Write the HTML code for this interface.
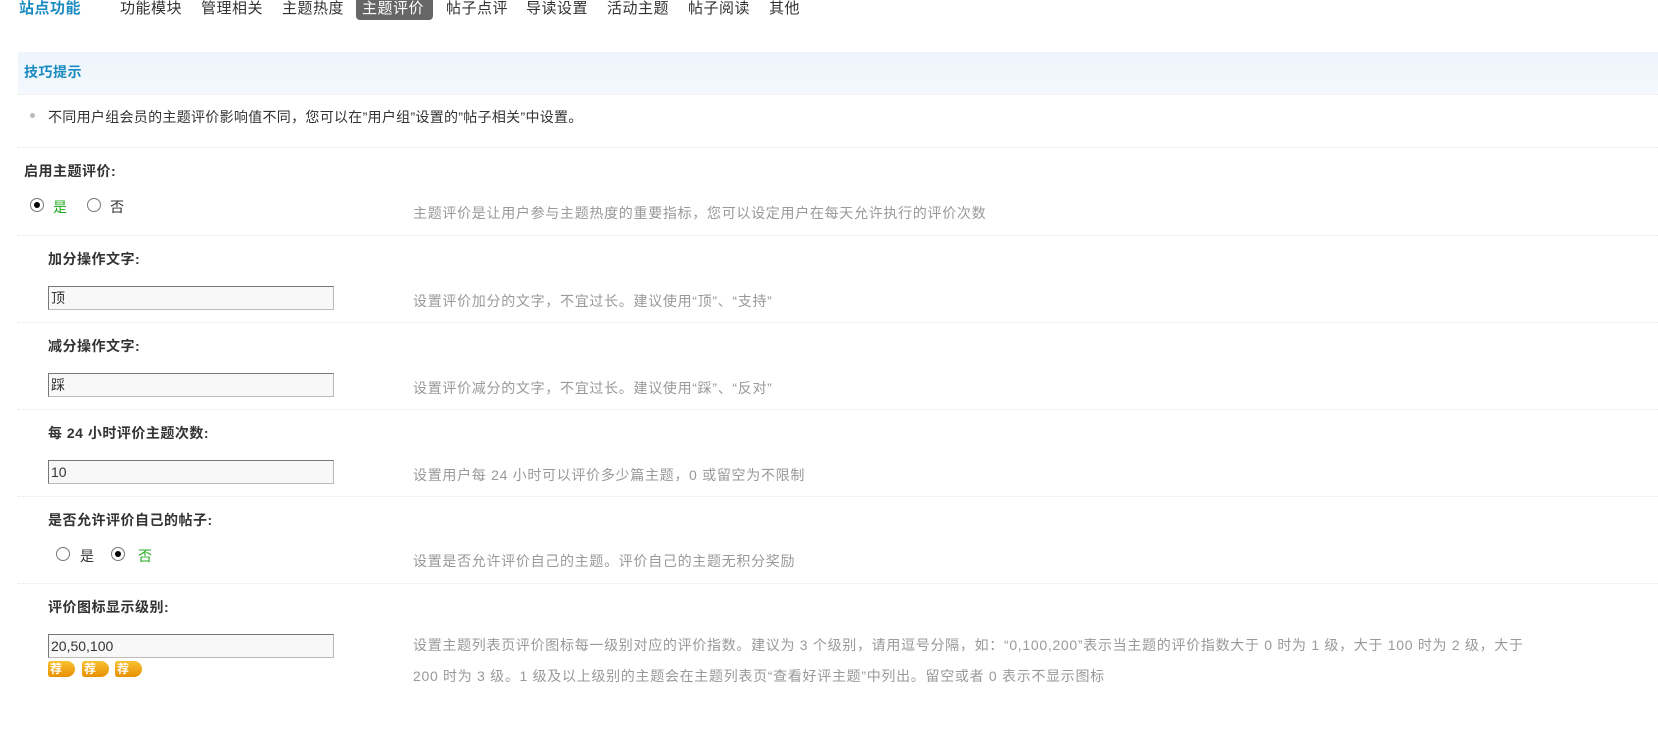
<!DOCTYPE html>
<html><head><meta charset="utf-8"><style>
body{margin:0;width:1658px;height:740px;overflow:hidden;background:#fff;font-family:"Liberation Sans","Noto Sans CJK SC",sans-serif;font-size:14px;color:#333}
.a{position:absolute;white-space:nowrap}
.nav span{position:absolute;top:0;font-size:15px;color:#333;line-height:18px;letter-spacing:.5px}
.sep{position:absolute;left:18px;right:0;height:0;border-top:1px dotted #e6e6e6}
.lbl{font-weight:bold;font-size:14px;color:#333;letter-spacing:.5px}
.hint{color:#999;font-size:14px;letter-spacing:.7px}
.inp{position:absolute;left:48px;width:282px;height:22px;border:1px solid #bbb;border-top-color:#777;border-left-color:#777;background:#f8f8f8;font-size:14px;line-height:22px;padding-left:2px;box-sizing:content-box;color:#333}
.r{position:absolute;width:12px;height:12px;border:1px solid #777;border-radius:50%;background:#fff}
.r.on::after{content:"";position:absolute;left:3px;top:3px;width:6px;height:6px;border-radius:50%;background:#000}
.icon{position:absolute;top:661px;width:27px;height:16px;background:linear-gradient(#f8c030,#e89000);border-radius:3px 9px 9px 3px;color:#fff;font-size:12px;font-weight:bold;line-height:16px;padding-left:2px;box-sizing:border-box}
</style></head><body>
<div class="nav">
<span style="left:19px;color:#1a8bc0;font-weight:bold">站点功能</span>
<span style="left:120px">功能模块</span>
<span style="left:201px">管理相关</span>
<span style="left:282px">主题热度</span>
<div class="a" style="left:356px;top:-3px;width:77px;height:23px;background:#666;border-radius:0 0 4px 4px"></div>
<span style="left:362px;color:#fff">主题评价</span>
<span style="left:446px">帖子点评</span>
<span style="left:526px">导读设置</span>
<span style="left:607px">活动主题</span>
<span style="left:688px">帖子阅读</span>
<span style="left:769px">其他</span>
</div>
<div class="a" style="left:18px;top:52px;right:0;height:42px;background:linear-gradient(#edf5fc,#f3f8fd)"></div>
<div class="a" style="left:24px;top:62px;color:#1a8bc0;font-size:14px;font-weight:bold;letter-spacing:.5px">技巧提示</div>
<div class="sep" style="top:94px"></div>
<div class="a" style="left:30px;top:113px;width:5px;height:5px;border-radius:50%;background:#bbb"></div>
<div class="a" style="left:48px;top:107px;font-size:14px;letter-spacing:.3px">不同用户组会员的主题评价影响值不同，您可以在”用户组”设置的”帖子相关”中设置。</div>
<div class="sep" style="top:147px"></div>
<div class="a lbl" style="left:24px;top:161px">启用主题评价:</div>
<div class="r on" style="left:30px;top:198px"></div><div class="a" style="left:53px;top:197px;color:#2a2">是</div>
<div class="r" style="left:87px;top:198px"></div><div class="a" style="left:110px;top:197px">否</div>
<div class="a hint" style="left:413px;top:203px">主题评价是让用户参与主题热度的重要指标，您可以设定用户在每天允许执行的评价次数</div>
<div class="sep" style="top:235px"></div>
<div class="a lbl" style="left:48px;top:249px">加分操作文字:</div>
<div class="inp" style="top:286px">顶</div>
<div class="a hint" style="left:413px;top:291px">设置评价加分的文字，不宜过长。建议使用“顶”、“支持”</div>
<div class="sep" style="top:322px"></div>
<div class="a lbl" style="left:48px;top:336px">减分操作文字:</div>
<div class="inp" style="top:373px">踩</div>
<div class="a hint" style="left:413px;top:378px">设置评价减分的文字，不宜过长。建议使用“踩”、“反对”</div>
<div class="sep" style="top:409px"></div>
<div class="a lbl" style="left:48px;top:423px">每 24 小时评价主题次数:</div>
<div class="inp" style="top:460px">10</div>
<div class="a hint" style="left:413px;top:465px">设置用户每 24 小时可以评价多少篇主题，0 或留空为不限制</div>
<div class="sep" style="top:496px"></div>
<div class="a lbl" style="left:48px;top:510px">是否允许评价自己的帖子:</div>
<div class="r" style="left:56px;top:547px"></div><div class="a" style="left:80px;top:546px">是</div>
<div class="r on" style="left:111px;top:547px"></div><div class="a" style="left:138px;top:546px;color:#2a2">否</div>
<div class="a hint" style="left:413px;top:551px">设置是否允许评价自己的主题。评价自己的主题无积分奖励</div>
<div class="sep" style="top:583px"></div>
<div class="a lbl" style="left:48px;top:597px">评价图标显示级别:</div>
<div class="inp" style="top:634px">20,50,100</div>
<div class="icon" style="left:48px">荐</div><div class="icon" style="left:82px">荐</div><div class="icon" style="left:115px">荐</div>
<div class="a hint" style="left:413px;top:630px;line-height:31px;white-space:normal;width:1150px">设置主题列表页评价图标每一级别对应的评价指数。建议为 3 个级别，请用逗号分隔，如：“0,100,200”表示当主题的评价指数大于 0 时为 1 级，大于 100 时为 2 级，大于<br>200 时为 3 级。1 级及以上级别的主题会在主题列表页“查看好评主题”中列出。留空或者 0 表示不显示图标</div>
</body></html>
